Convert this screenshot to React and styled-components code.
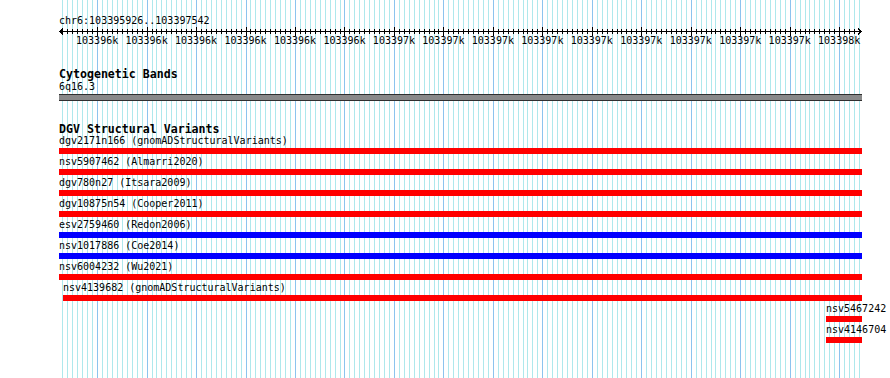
import styled, { createGlobalStyle } from 'styled-components';

const START = 103395926;
const END = 103397542;
const PANEL_LEFT = 59;
const PANEL_WIDTH = 803;
const SCALE = 0.4947;

// x of a base position, relative to the panel's left edge
const toX = bp => 1.5 + (bp - START) * SCALE;

const gridStops = [];
for (let bp = Math.ceil(START / 10) * 10; bp <= END; bp += 10) {
  gridStops.push({ x: Math.round(toX(bp)), major: bp % 100 === 0 });
}

const tickLabels = [
  ...Array(6).fill('103396k'),
  ...Array(9).fill('103397k'),
  '103398k',
];

const features = [
  { id: 'dgv2171n166', src: 'gnomADStructuralVariants', color: '#ff0000', from: 0, to: PANEL_WIDTH },
  { id: 'nsv5907462', src: 'Almarri2020', color: '#ff0000', from: 0, to: PANEL_WIDTH },
  { id: 'dgv780n27', src: 'Itsara2009', color: '#ff0000', from: 0, to: PANEL_WIDTH },
  { id: 'dgv10875n54', src: 'Cooper2011', color: '#ff0000', from: 0, to: PANEL_WIDTH },
  { id: 'esv2759460', src: 'Redon2006', color: '#0000ff', from: 0, to: PANEL_WIDTH },
  { id: 'nsv1017886', src: 'Coe2014', color: '#0000ff', from: 0, to: PANEL_WIDTH },
  { id: 'nsv6004232', src: 'Wu2021', color: '#ff0000', from: 0, to: PANEL_WIDTH },
  { id: 'nsv4139682', src: 'gnomADStructuralVariants', color: '#ff0000', from: 4, to: PANEL_WIDTH },
  { id: 'nsv5467242', color: '#ff0000', from: 767, to: PANEL_WIDTH },
  { id: 'nsv4146704', color: '#ff0000', from: 767, to: PANEL_WIDTH },
];

const GlobalStyle = createGlobalStyle`
  html, body {
    margin: 0;
    padding: 0;
    background: #ffffff;
  }
`;

const Canvas = styled.div`
  position: relative;
  width: 890px;
  height: 378px;
  overflow: hidden;
  background: #ffffff;
  font-family: "DejaVu Sans Mono", "Liberation Mono", monospace;
  color: #000000;
`;

const GridLayer = styled.svg`
  position: absolute;
  top: 0;
  left: ${PANEL_LEFT}px;
  z-index: 0;
`;

const Panel = styled.div`
  position: relative;
  z-index: 1;
  display: flex;
  flex-direction: column;
  width: ${PANEL_WIDTH}px;
  padding: 15px 0 0 ${PANEL_LEFT}px;
`;

const SmallText = styled.div`
  font-size: 10px;
  line-height: 12px;
  height: 12px;
  white-space: nowrap;
`;

const RulerSvg = styled.svg`
  display: block;
`;

const TickRow = styled.div`
  display: flex;
  margin: -1px 0 0 13.4px;
`;

const TickLabel = styled(SmallText)`
  flex: 0 0 ${SCALE * 100}px;
  text-align: center;
`;

const TrackTitle = styled.div`
  font-size: 11.6px;
  font-weight: 700;
  line-height: 12px;
  height: 12px;
  white-space: nowrap;
  margin-top: ${p => p.$gap}px;
`;

const BandBar = styled.div`
  height: 5px;
  margin-top: 1px;
  background: #898989;
  border-top: 1px solid #303030;
  border-bottom: 1px solid #303030;
`;

const FeatureRow = styled.div`
  display: flex;
  flex-direction: column;
  height: 21px;
`;

const FeatureBar = styled.div`
  height: 6px;
  margin-top: 1px;
  background: ${p => p.$color};
`;

function Grid() {
  return (
    <GridLayer width={PANEL_WIDTH} height={378} shapeRendering="crispEdges">
      {gridStops.map(g => (
        <rect
          key={g.x}
          x={g.x}
          y={0}
          width={1}
          height={378}
          fill={g.major ? '#8cc4ee' : '#aee8ec'}
        />
      ))}
    </GridLayer>
  );
}

function Ruler() {
  const y = 4;
  const left = 1;
  const right = 802;
  return (
    <RulerSvg width={PANEL_WIDTH} height={9} shapeRendering="crispEdges">
      <line x1={left} y1={y + 0.5} x2={right} y2={y + 0.5} stroke="#000" />
      {gridStops.map(g => (
        <line
          key={g.x}
          x1={g.x + 0.5}
          x2={g.x + 0.5}
          y1={g.major ? 0 : 2}
          y2={g.major ? 9 : 7}
          stroke="#000"
        />
      ))}
      <path d={`M${left + 3} ${y - 2.5} L${left} ${y + 0.5} L${left + 3} ${y + 3.5}`} stroke="#000" fill="none" />
      <path d={`M${right - 3} ${y - 2.5} L${right} ${y + 0.5} L${right - 3} ${y + 3.5}`} stroke="#000" fill="none" />
    </RulerSvg>
  );
}

export default function App() {
  return (
    <Canvas>
      <GlobalStyle />
      <Grid />
      <Panel>
        <SmallText>chr6:103395926..103397542</SmallText>
        <Ruler />
        <TickRow>
          {tickLabels.map((t, i) => (
            <TickLabel key={i}>{t}</TickLabel>
          ))}
        </TickRow>

        <TrackTitle $gap={21}>Cytogenetic Bands</TrackTitle>
        <SmallText style={{ marginTop: 1 }}>6q16.3</SmallText>
        <BandBar />

        <TrackTitle $gap={22}>DGV Structural Variants</TrackTitle>
        {features.map(f => (
          <FeatureRow key={f.id}>
            <SmallText style={{ marginLeft: f.from }}>
              {f.src ? `${f.id} (${f.src})` : f.id}
            </SmallText>
            <FeatureBar
              $color={f.color}
              style={{ marginLeft: f.from, width: f.to - f.from }}
            />
          </FeatureRow>
        ))}
      </Panel>
    </Canvas>
  );
}
